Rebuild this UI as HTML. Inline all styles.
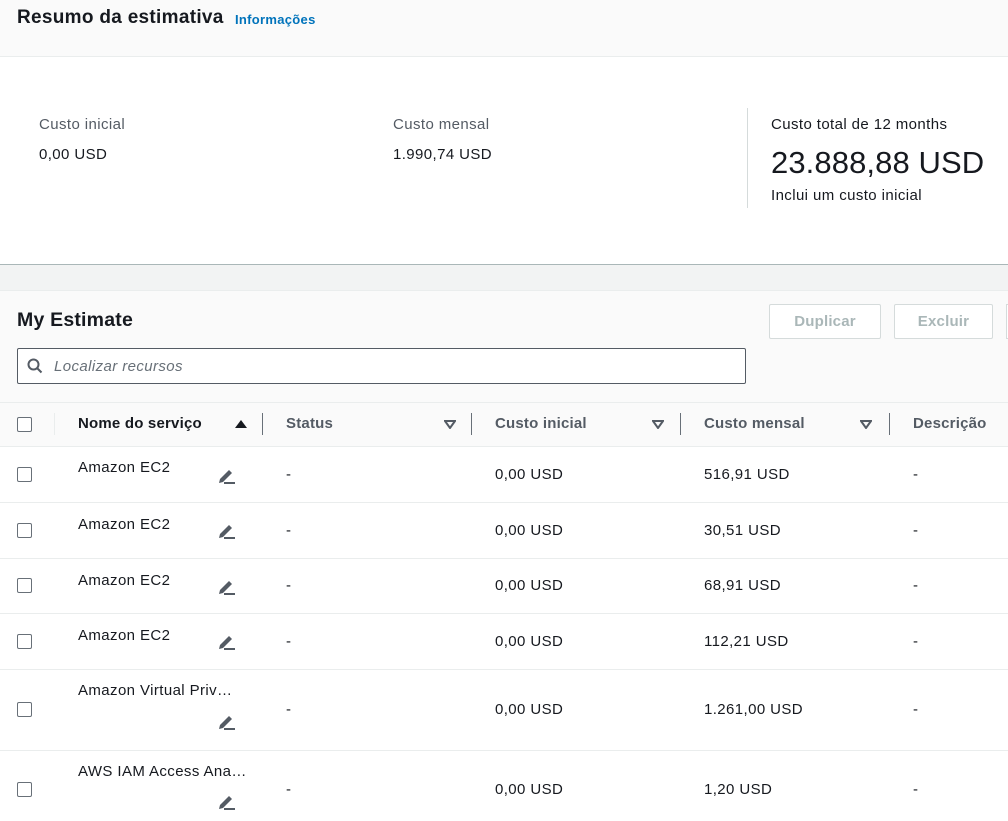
<!DOCTYPE html>
<html><head><meta charset="utf-8"><style>
*{box-sizing:border-box;margin:0;padding:0}
body{width:1008px;height:821px;overflow:hidden;background:#fff;font-family:"Liberation Sans",Arial,sans-serif;color:#16191f;font-size:15px;letter-spacing:.4px;position:relative}
.a{position:absolute;white-space:nowrap}
.cb{position:absolute;width:15px;height:15px;border:1px solid #687078;border-radius:2px;background:#fff}
.hd{font-weight:bold;color:#545b64;font-size:15px;letter-spacing:.2px}
.dv{position:absolute;width:1px;height:22px;background:#687078;top:413px}
.tri{position:absolute;top:419px}
.row{position:absolute;left:0;width:1008px;border-top:1px solid #eaeded}
.ed{position:absolute}
</style></head><body>
<div class="a" style="left:0;top:0;width:1008px;height:57px;background:#fafafa;border-bottom:1px solid #eaeded"></div>
<div class="a" style="left:17px;top:7px;font-size:19px;font-weight:bold;letter-spacing:.3px">Resumo da estimativa</div>
<div class="a" style="left:235px;top:12px;font-size:13px;font-weight:bold;color:#0073bb;letter-spacing:.3px">Informações</div>

<div class="a" style="left:39px;top:116px;color:#545b64">Custo inicial</div>
<div class="a" style="left:39px;top:146px">0,00 USD</div>
<div class="a" style="left:393px;top:116px;color:#545b64">Custo mensal</div>
<div class="a" style="left:393px;top:146px">1.990,74 USD</div>
<div class="a" style="left:747px;top:108px;width:1px;height:100px;background:#d5dbdb"></div>
<div class="a" style="left:771px;top:116px">Custo total de 12 months</div>
<div class="a" style="left:771px;top:145px;font-size:31px;letter-spacing:.1px">23.888,88 USD</div>
<div class="a" style="left:771px;top:187px">Inclui um custo inicial</div>

<div class="a" style="left:0;top:264px;width:1008px;height:27px;background:#f2f3f3;border-top:1px solid #aab7b8;border-bottom:1px solid #eaeded"></div>
<div class="a" style="left:0;top:291px;width:1008px;height:156px;background:#fafafa"></div>
<div class="a" style="left:17px;top:309px;font-size:19.5px;font-weight:bold;letter-spacing:.2px">My Estimate</div>
<div class="a" style="left:769px;top:304px;width:112px;height:35px;border:1px solid #d5dbdb;border-radius:2px;background:#fff;color:#aab7b8;font-weight:bold;text-align:center;line-height:33px;letter-spacing:.2px">Duplicar</div>
<div class="a" style="left:894px;top:304px;width:99px;height:35px;border:1px solid #d5dbdb;border-radius:2px;background:#fff;color:#aab7b8;font-weight:bold;text-align:center;line-height:33px;letter-spacing:.2px">Excluir</div>
<div class="a" style="left:1006px;top:304px;width:4px;height:35px;border:1px solid #d5dbdb;background:#fff"></div>
<div class="a" style="left:17px;top:348px;width:729px;height:36px;border:1px solid #545b64;border-radius:2px;background:#fff"></div>
<svg class="a" style="left:27px;top:358px" width="16" height="16" viewBox="0 0 16 16"><circle cx="6.5" cy="6.5" r="5" fill="none" stroke="#545b64" stroke-width="2"/><path d="M10 10l4.5 4.5" stroke="#545b64" stroke-width="2"/></svg>
<div class="a" style="left:54px;top:358px;font-style:italic;color:#687078">Localizar recursos</div>

<div class="row" style="top:402px;height:45px;background:#fafafa;border-bottom:1px solid #eaeded"></div>
<div class="cb" style="left:17px;top:417px"></div>
<div class="a" style="left:54px;top:413px;width:1px;height:22px;background:#eaeded"></div>
<div class="a hd" style="left:78px;top:415px;color:#16191f">Nome do serviço</div>
<svg class="tri" style="left:235px" width="12" height="10"><path d="M0 9L6 1L12 9Z" fill="#16191f"/></svg>
<div class="dv" style="left:262px"></div>
<div class="a hd" style="left:286px;top:415px">Status</div>
<svg class="tri" style="left:444px" width="12" height="10"><path d="M1 2H11L6 9Z" fill="none" stroke="#545b64" stroke-width="2"/></svg>
<div class="dv" style="left:471px"></div>
<div class="a hd" style="left:495px;top:415px">Custo inicial</div>
<svg class="tri" style="left:652px" width="12" height="10"><path d="M1 2H11L6 9Z" fill="none" stroke="#545b64" stroke-width="2"/></svg>
<div class="dv" style="left:680px"></div>
<div class="a hd" style="left:704px;top:415px">Custo mensal</div>
<svg class="tri" style="left:860px" width="12" height="10"><path d="M1 2H11L6 9Z" fill="none" stroke="#545b64" stroke-width="2"/></svg>
<div class="dv" style="left:889px"></div>
<div class="a hd" style="left:913px;top:415px">Descrição</div>

<div class="row" style="top:502px"></div>
<div class="row" style="top:558px"></div>
<div class="row" style="top:613px"></div>
<div class="row" style="top:669px"></div>
<div class="row" style="top:750px"></div>

<div id="r"></div>
<script>
var rows=[[447,"Amazon EC2","516,91 USD",467,474,476],[503,"Amazon EC2","30,51 USD",524,530,531],[559,"Amazon EC2","68,91 USD",580,585,587],[614,"Amazon EC2","112,21 USD",635,641,642],[670,"Amazon Virtual Priv…","1.261,00 USD",690,709,722],[751,"AWS IAM Access Ana…","1,20 USD",771,789,802]];
var h="";
rows.forEach(function(r){
h+='<div class="cb" style="left:17px;top:'+(r[4]-7)+'px"></div>';
h+='<div class="a" style="left:78px;top:'+(r[3]-8)+'px">'+r[1]+'</div>';
h+='<svg class="ed" style="left:218px;top:'+(r[5]-8)+'px" width="18" height="16" viewBox="0 0 18 16"><path d="M1 15L2 11L11 2L14 5L5 14Z" fill="#545b64"/><path d="M6 15H17" stroke="#545b64" stroke-width="2"/></svg>';
h+='<div class="a" style="left:286px;top:'+(r[4]-8)+'px">-</div>';
h+='<div class="a" style="left:495px;top:'+(r[4]-8)+'px">0,00 USD</div>';
h+='<div class="a" style="left:704px;top:'+(r[4]-8)+'px">'+r[2]+'</div>';
h+='<div class="a" style="left:913px;top:'+(r[4]-8)+'px">-</div>';
});
document.getElementById("r").innerHTML=h;
</script>
</body></html>
